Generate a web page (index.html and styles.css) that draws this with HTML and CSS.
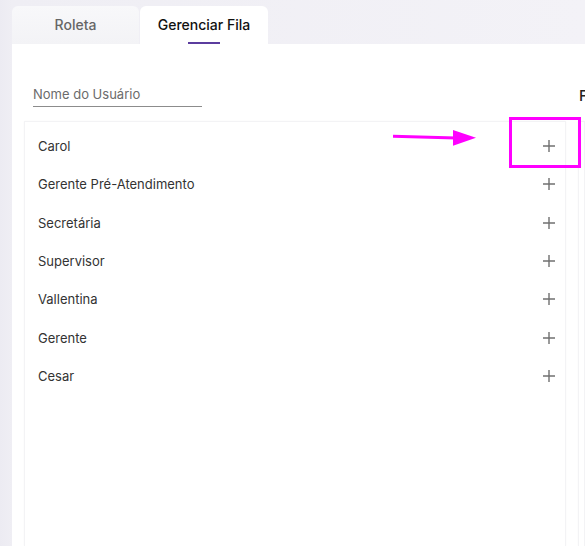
FILE: index.html
```html
<!DOCTYPE html>
<html lang="pt-BR">
<head>
<meta charset="utf-8">
<title>Gerenciar Fila</title>
<link rel="stylesheet" href="styles.css">
</head>
<body>
<div class="page">
  <div class="tabs">
    <div class="tab">Roleta</div>
    <div class="tab active">Gerenciar Fila<span class="ink"></span></div>
  </div>
  <div class="panel">
    <div class="col">
      <div class="field">
        <div class="field-label">Nome do Usuário</div>
      </div>
      <div class="card">
        <div class="row"><span>Carol</span><svg class="plus" viewBox="0 0 12 12"><path d="M6 0v12M0 6h12"/></svg></div>
        <div class="row"><span>Gerente Pré-Atendimento</span><svg class="plus" viewBox="0 0 12 12"><path d="M6 0v12M0 6h12"/></svg></div>
        <div class="row"><span>Secretária</span><svg class="plus" viewBox="0 0 12 12"><path d="M6 0v12M0 6h12"/></svg></div>
        <div class="row"><span>Supervisor</span><svg class="plus" viewBox="0 0 12 12"><path d="M6 0v12M0 6h12"/></svg></div>
        <div class="row"><span>Vallentina</span><svg class="plus" viewBox="0 0 12 12"><path d="M6 0v12M0 6h12"/></svg></div>
        <div class="row"><span>Gerente</span><svg class="plus" viewBox="0 0 12 12"><path d="M6 0v12M0 6h12"/></svg></div>
        <div class="row"><span>Cesar</span><svg class="plus" viewBox="0 0 12 12"><path d="M6 0v12M0 6h12"/></svg></div>
      </div>
    </div>
    <div class="col col2">
      <div class="heading">Fila de Atendimento</div>
      <div class="card"></div>
    </div>
  </div>
</div>
<svg class="annot" width="585" height="546" viewBox="0 0 585 546">
  <rect x="510.5" y="118.5" width="69" height="48" fill="none" stroke="#ff00ff" stroke-width="3"/>
  <path d="M393 136.3 L456 138" stroke="#ff00ff" stroke-width="3" fill="none"/>
  <path d="M453 130 L476 137.8 L453 145.7 Z" fill="#ff00ff"/>
</svg>
</body>
</html>
```

FILE: styles.css
```css
html, body {
  margin: 0;
  padding: 0;
  height: 100%;
  overflow: hidden;
}
body {
  background: linear-gradient(90deg, #ecebf2 0, #efeef4 12px, #f3f2f7 100%);
  font-family: Inter, "Noto Sans", "Liberation Sans", sans-serif;
  color: #333;
}
.page {
  display: flex;
  flex-direction: column;
  height: 100%;
  padding: 6px 0 0 12px;
  box-sizing: border-box;
}
.tabs {
  display: flex;
  gap: 1px;
  height: 38px;
}
.tab {
  position: relative;
  width: 127px;
  height: 38px;
  border-radius: 6px 6px 0 0;
  background: linear-gradient(180deg, #f8f8fa, #f3f3f6);
  display: flex;
  align-items: center;
  justify-content: center;
  font-size: 14px;
  font-weight: 500;
  color: #666;
  padding-bottom: 1px;
  box-sizing: border-box;
}
.tab.active {
  width: 128px;
  background: #fff;
  color: #111;
}
.ink {
  position: absolute;
  left: 48px;
  width: 32px;
  bottom: 0;
  height: 2px;
  background: #5b3c9e;
}
.panel {
  flex: 1;
  background: #fff;
  display: grid;
  grid-template-columns: 542px 1fr;
  column-gap: 12px;
  padding: 0 0 0 12px;
  min-height: 0;
  overflow: hidden;
}
.col {
  display: flex;
  flex-direction: column;
  min-height: 0;
  min-width: 0;
}
.field {
  margin: 40px 0 0 9px;
  width: 169px;
  height: 23px;
  border-bottom: 1px solid #8c8c8c;
  box-sizing: border-box;
}
.field-label {
  font-size: 13px;
  color: #6b6b6b;
  line-height: 16px;
  padding-top: 2px;
}
.card {
  flex: 1;
  margin-top: 14px;
  border: 1px solid #f3f3f5;
  border-bottom: none;
  box-shadow: 0 0 2px rgba(0, 0, 0, 0.03);
  padding-top: 5px;
}
.row {
  height: 38.3px;
  display: flex;
  align-items: center;
  justify-content: space-between;
  padding: 0 10px 0 13px;
  font-size: 13px;
  color: #333;
}
.plus {
  width: 12px;
  height: 12px;
  stroke: #707070;
  stroke-width: 1.4;
  fill: none;
}
.col2 .heading {
  margin-top: 42px;
  padding-left: 1px;
  font-size: 15px;
  font-weight: 500;
  color: #222;
  white-space: nowrap;
  height: 19px;
}
.col2 .card {
  margin-top: 16px;
}
.annot {
  position: absolute;
  left: 0;
  top: 0;
  pointer-events: none;
}
```
